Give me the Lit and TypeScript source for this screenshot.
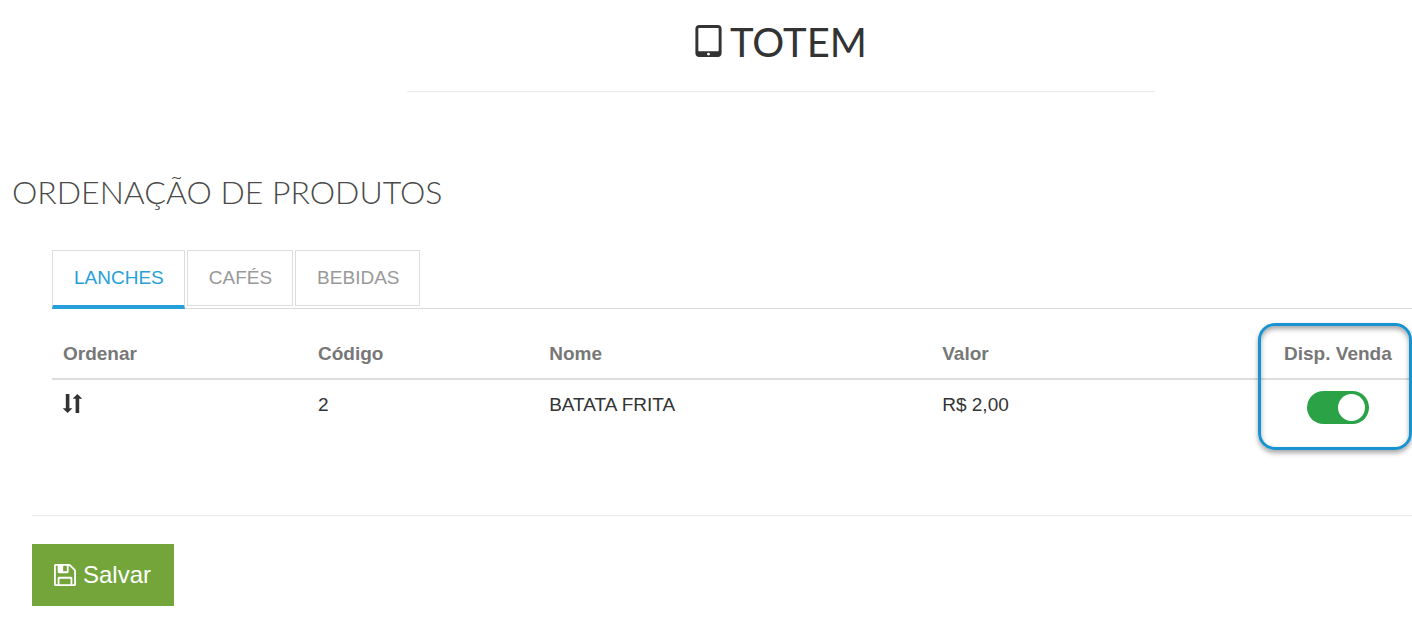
import { LitElement, html, css } from "lit";
import { customElement, state } from "lit/decorators.js";

interface Product {
  code: number;
  name: string;
  price: string;
  available: boolean;
}

@customElement("app-root")
export class AppRoot extends LitElement {
  static styles = css`
    :host {
      display: block;
      overflow-x: hidden;
      background: #fff;
      color: #333;
      font: 19px/28px "Liberation Sans", Arial, sans-serif;
    }
    * {
      box-sizing: border-box;
    }
    .masthead {
      display: flex;
      justify-content: center;
      padding: 16px 0 0 150px;
    }
    .brand {
      display: flex;
      align-items: flex-start;
      justify-content: center;
      gap: 8px;
      width: 59.3%;
      margin: 0;
      padding-bottom: 22px;
      border-bottom: 1px solid #eaeaea;
      font: 400 40px/53px Lato, sans-serif;
    }
    .brand svg {
      width: 27px;
      height: 32px;
      margin-top: 9px;
    }
    .section-title {
      margin: 76px 0 0 12px;
      font: 300 32px/48px Lato, sans-serif;
      color: #4a4a4a;
    }
    .panel {
      margin: 34px 0 0 52px;
    }
    .tabs {
      display: flex;
      align-items: flex-start;
      gap: 2px;
      height: 59px;
      border-bottom: 1px solid #d9d9d9;
    }
    .tab {
      height: 56px;
      padding: 0 20px 0 21px;
      border: 1px solid #ddd;
      background: #fff;
      color: #999;
      font: inherit;
      cursor: pointer;
    }
    .tab.active {
      height: 59px;
      padding-bottom: 0;
      border-bottom: 4px solid #26a0da;
      color: #26a0da;
    }
    .list {
      position: relative;
    }
    table {
      width: 100%;
      table-layout: fixed;
      border-collapse: collapse;
    }
    th,
    td {
      padding: 0 11px;
      text-align: left;
      vertical-align: top;
    }
    th {
      padding-top: 31px;
      padding-bottom: 10px;
      border-bottom: 2px solid #ddd;
      color: #777;
      white-space: nowrap;
    }
    td {
      padding-top: 11px;
    }
    .c-order {
      width: 18.75%;
    }
    .c-code {
      width: 17%;
    }
    .c-name {
      width: 28.9%;
    }
    .c-sale {
      width: 10.9%;
    }
    .center {
      text-align: center;
    }
    .sort {
      display: block;
      width: 19px;
      height: 19px;
      margin-top: 3px;
    }
    .switch {
      appearance: none;
      display: block;
      width: 62px;
      height: 33px;
      margin: 0 auto;
      padding: 3px;
      border-radius: 17px;
      background: #ccc;
      cursor: pointer;
    }
    .switch::before {
      content: "";
      display: block;
      width: 27px;
      height: 27px;
      border-radius: 50%;
      background: #fff;
    }
    .switch:checked {
      background: #2ba245;
    }
    .switch:checked::before {
      margin-left: 28px;
    }
    .highlight {
      position: absolute;
      top: 14px;
      right: 0;
      width: 154px;
      height: 127px;
      border: 3px solid #1793d1;
      border-radius: 17px;
      box-shadow: 0 3px 5px rgba(0, 0, 0, 0.35),
        inset 0 3px 5px rgba(0, 0, 0, 0.35);
      pointer-events: none;
    }
    .actions {
      margin: 91px 0 0 32px;
      padding: 28px 0 18px;
      border-top: 1px solid #eaeaea;
    }
    .save {
      display: flex;
      align-items: center;
      gap: 7px;
      height: 62px;
      padding: 0 23px 0 22px;
      border: 0;
      background: #73a53b;
      color: #fff;
      font: 24px/32px "Liberation Sans", Arial, sans-serif;
      cursor: pointer;
    }
    .save svg {
      width: 22px;
      height: 22px;
    }
  `;

  @state() private active = 0;

  private categories = ["LANCHES", "CAFÉS", "BEBIDAS"];

  private products: Product[] = [
    { code: 2, name: "BATATA FRITA", price: "R$ 2,00", available: true },
  ];

  render() {
    return html`
      <header class="masthead">
        <h1 class="brand">
          <svg viewBox="320 128 1152 1408" fill="currentColor" aria-hidden="true">
            <path
              d="M960 1408q0-26-19-45t-45-19-45 19-19 45 19 45 45 19 45-19 19-45zm384-160v-960q0-13-9.5-22.5t-22.5-9.5h-832q-13 0-22.5 9.5t-9.5 22.5v960q0 13 9.5 22.5t22.5 9.5h832q13 0 22.5-9.5t9.5-22.5zm128-960v1088q0 66-47 113t-113 47h-832q-66 0-113-47t-47-113v-1088q0-66 47-113t113-47h832q66 0 113 47t47 113z"
            />
          </svg>
          <span>TOTEM</span>
        </h1>
      </header>
      <main>
        <h2 class="section-title">ORDENAÇÃO DE PRODUTOS</h2>
        <section class="panel">
          <div class="tabs" role="tablist">
            ${this.categories.map(
              (label, i) => html`<button
                class="tab ${i === this.active ? "active" : ""}"
                role="tab"
                aria-selected=${i === this.active ? "true" : "false"}
                @click=${() => (this.active = i)}
              >${label}</button>`
            )}
          </div>
          <div class="list">
            <table>
              <thead>
                <tr>
                  <th class="c-order">Ordenar</th>
                  <th class="c-code">Código</th>
                  <th class="c-name">Nome</th>
                  <th>Valor</th>
                  <th class="c-sale center" id="sale">Disp. Venda</th>
                </tr>
              </thead>
              <tbody>
                ${this.products.map(
                  (p) => html`<tr>
                    <td>
                      <svg class="sort" viewBox="0 0 19 19" fill="currentColor" aria-hidden="true">
                        <path d="M2.8 0h3.6v14.2H9.4L4.6 19 -0.2 14.2H2.8z" />
                        <path d="M12.6 19V4.8H9.6L14.4 0 19.2 4.8H16.2V19z" />
                      </svg>
                    </td>
                    <td>${p.code}</td>
                    <td>${p.name}</td>
                    <td>${p.price}</td>
                    <td class="center">
                      <input
                        class="switch"
                        type="checkbox"
                        aria-labelledby="sale"
                        .checked=${p.available}
                      />
                    </td>
                  </tr>`
                )}
              </tbody>
            </table>
            <div class="highlight"></div>
          </div>
        </section>
        <div class="actions">
          <button class="save">
            <svg viewBox="128 128 1536 1536" fill="currentColor" aria-hidden="true">
              <path
                d="M512 1536h768v-384h-768v384zm896 0h128v-896q0-14-10-38.5t-20-34.5l-281-281q-10-10-34-20t-39-10v416q0 40-28 68t-68 28h-576q-40 0-68-28t-28-68v-416h-128v1280h128v-416q0-40 28-68t68-28h832q40 0 68 28t28 68v416zm-384-928v-320q0-13-9.5-22.5t-22.5-9.5h-192q-13 0-22.5 9.5t-9.5 22.5v320q0 13 9.5 22.5t22.5 9.5h192q13 0 22.5-9.5t9.5-22.5zm640 32v928q0 40-28 68t-68 28h-1344q-40 0-68-28t-28-68v-1344q0-40 28-68t68-28h928q40 0 88 20t76 48l280 280q28 28 48 76t20 88z"
              />
            </svg>
            <span>Salvar</span>
          </button>
        </div>
      </main>
    `;
  }
}
